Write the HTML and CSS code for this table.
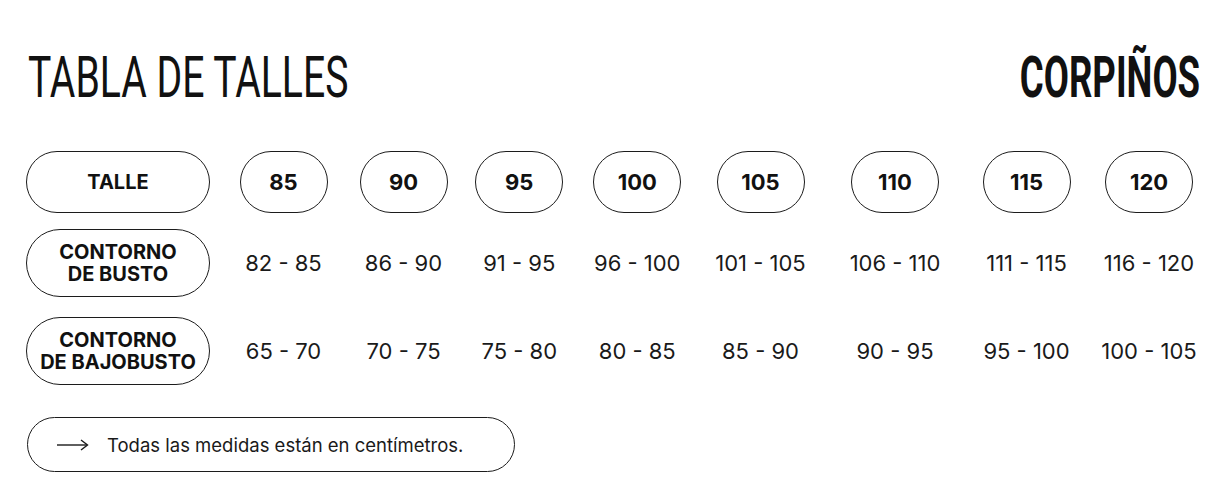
FILE: index.html
```html
<!DOCTYPE html>
<html lang="es">
<head>
<meta charset="utf-8">
<title>Tabla de talles</title>
<link rel="stylesheet" href="styles.css">
</head>
<body>
<main class="page">
  <header class="header">
    <h1 class="title"><span class="title-text">TABLA DE TALLES</span></h1>
    <h2 class="category"><span class="category-text">CORPIÑOS</span></h2>
  </header>

  <section class="table">
    <div class="label pill"><span>TALLE</span></div>
    <div class="cell"><span class="size pill">85</span></div>
    <div class="cell"><span class="size pill">90</span></div>
    <div class="cell"><span class="size pill">95</span></div>
    <div class="cell"><span class="size pill">100</span></div>
    <div class="cell"><span class="size pill">105</span></div>
    <div class="cell"><span class="size pill">110</span></div>
    <div class="cell"><span class="size pill">115</span></div>
    <div class="cell"><span class="size pill">120</span></div>

    <div class="label pill tall"><span>CONTORNO<br>DE BUSTO</span></div>
    <div class="cell value">82 - 85</div>
    <div class="cell value">86 - 90</div>
    <div class="cell value">91 - 95</div>
    <div class="cell value">96 - 100</div>
    <div class="cell value">101 - 105</div>
    <div class="cell value">106 - 110</div>
    <div class="cell value">111 - 115</div>
    <div class="cell value">116 - 120</div>

    <div class="label pill tall"><span>CONTORNO<br>DE BAJOBUSTO</span></div>
    <div class="cell value">65 - 70</div>
    <div class="cell value">70 - 75</div>
    <div class="cell value">75 - 80</div>
    <div class="cell value">80 - 85</div>
    <div class="cell value">85 - 90</div>
    <div class="cell value">90 - 95</div>
    <div class="cell value">95 - 100</div>
    <div class="cell value">100 - 105</div>
  </section>

  <footer class="note pill">
    <svg class="arrow" width="32" height="12" viewBox="0 0 32 12" aria-hidden="true">
      <line x1="0" y1="6" x2="30" y2="6" stroke="#1a1a1a" stroke-width="1.4"/>
      <polyline points="24,1 30.5,6 24,11" fill="none" stroke="#1a1a1a" stroke-width="1.4"/>
    </svg>
    <span class="note-text">Todas las medidas están en centímetros.</span>
  </footer>
</main>
</body>
</html>
```

FILE: styles.css
```css
* {
  box-sizing: border-box;
}

html, body {
  margin: 0;
  padding: 0;
  background: #ffffff;
}

body {
  font-family: Inter, "Liberation Sans", sans-serif;
  color: #141414;
  width: 1224px;
  height: 484px;
  overflow: hidden;
}

.page {
  padding: 48px 24px 0 26px;
}

.header {
  display: flex;
  justify-content: space-between;
  align-items: flex-start;
  height: 58px;
}

.title,
.category {
  margin: 0;
  font-family: Roboto, "Liberation Sans", sans-serif;
  font-size: 58px;
  line-height: 58px;
  color: #111111;
  white-space: nowrap;
}

.title {
  font-weight: 400;
}

.title-text {
  display: inline-block;
  transform: scaleX(0.675);
  transform-origin: left center;
  margin-left: 2px;
}

.category {
  font-weight: 700;
}

.category-text {
  display: inline-block;
  transform: scaleX(0.63);
  transform-origin: right center;
}

.table {
  margin-top: 45px;
  display: grid;
  grid-template-columns: 196px 123px 117px 114.5px 121.5px 125px 144px 119px 126px;
  grid-template-rows: 62px 84px 88px;
}

.pill {
  border: 1.6px solid #1c1c1c;
  border-radius: 999px;
}

.label {
  align-self: end;
  width: 184px;
  display: flex;
  align-items: center;
  justify-content: center;
  text-align: center;
  font-weight: 700;
  font-size: 20px;
  line-height: 22px;
  height: 62px;
  color: #111111;
}

.label.tall {
  height: 68px;
}

.cell {
  align-self: end;
  display: flex;
  align-items: center;
  justify-content: center;
  height: 62px;
}

.value {
  height: 68px;
  font-size: 22px;
  font-weight: 400;
  color: #1a1a1a;
  white-space: nowrap;
}

.size {
  width: 88px;
  height: 62px;
  display: flex;
  align-items: center;
  justify-content: center;
  font-size: 22px;
  font-weight: 700;
  color: #111111;
}

.note {
  margin-top: 32px;
  margin-left: 1px;
  width: 488px;
  height: 55px;
  display: flex;
  align-items: center;
  padding-left: 29px;
}

.arrow {
  display: block;
  flex: none;
}

.note-text {
  margin-left: 18px;
  font-size: 18.5px;
  color: #1a1a1a;
}
```
